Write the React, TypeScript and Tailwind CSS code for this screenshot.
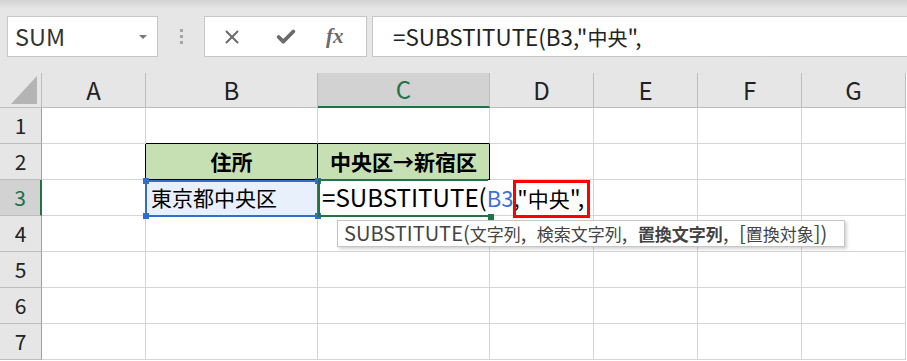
import { Check, X } from "lucide-react";

const cols = ["A", "B", "C", "D", "E", "F", "G"];
const rows = [1, 2, 3, 4, 5, 6, 7];

const CJK = /([\u3000-\u9fff\uff00-\uffef→]+)/;

// Excel's UI font draws latin glyphs larger than the CJK ones, so latin runs get bumped up
function Mixed({ text, latin = "text-[1.18em]" }: { text: string; latin?: string }) {
  const parts = text.split(CJK).filter(Boolean);
  return (
    <>
      {parts.map((p, i) =>
        CJK.test(p) ? (
          <span key={i}>{p}</span>
        ) : (
          <span key={i} className={latin}>
            {p}
          </span>
        ),
      )}
    </>
  );
}

function Cell({ row, col }: { row: number; col: string }) {
  if (row === 2 && (col === "B" || col === "C")) {
    return (
      <div className="flex items-center justify-center border-r border-b border-black bg-[#c6e0b4] text-[21px] font-bold leading-none text-black">
        {col === "B" ? "住所" : "中央区→新宿区"}
      </div>
    );
  }
  if (row === 3 && col === "B") {
    return (
      <div className="flex items-center border-r border-b border-[#d4d4d4] bg-[#e8f0fb] pl-[5px] text-[21px] leading-none text-black">
        東京都中央区
      </div>
    );
  }
  if (row === 3 && col === "C") {
    return (
      <div className="relative z-10 flex items-center overflow-visible whitespace-nowrap border-b border-[#d4d4d4] pl-[4px] text-[21px] leading-none text-black">
        <span>
          <Mixed text="=SUBSTITUTE(" latin="text-[1.15em]" />
          <span className="text-[1.05em] text-[#3a72d6]">B3</span>
          <span className="text-[1.05em]">,"</span>
          中央
          <span className="text-[1.1em]">",</span>
        </span>
      </div>
    );
  }
  if (row === 1 && (col === "B" || col === "C")) {
    return <div className="border-r border-b border-r-[#d4d4d4] border-b-black" />;
  }
  if (row === 2 && col === "A") {
    return <div className="border-r border-b border-r-black border-b-[#d4d4d4]" />;
  }
  return <div className="border-r border-b border-[#d4d4d4]" />;
}

export default function App() {
  return (
    <div className="h-[361px] w-[907px] overflow-hidden bg-white font-['Noto_Sans_CJK_JP',sans-serif] text-[#333]">
      {/* formula toolbar */}
      <div className="flex h-[73px] items-start bg-gradient-to-b from-[#d2d2d2] via-[#e6e6e6] via-[12%] to-[#e6e6e6] pt-4 pl-[7px]">
        <div className="flex h-[41px] w-[151px] items-center justify-between border border-[#c6c6c6] bg-white pr-[10px] pl-[7px]">
          <span className="text-[23.5px] leading-none text-[#333]">SUM</span>
          <span className="h-0 w-0 border-t-[4px] border-r-[4px] border-l-[4px] border-t-[#777] border-r-transparent border-l-transparent" />
        </div>
        <div className="flex h-[41px] w-[46px] flex-col items-center justify-center gap-[3px]">
          <span className="h-[3px] w-[3px] bg-[#a6a6a6]" />
          <span className="h-[3px] w-[3px] bg-[#a6a6a6]" />
          <span className="h-[3px] w-[3px] bg-[#a6a6a6]" />
        </div>
        <div className="flex h-[41px] w-[163px] items-center border border-[#c6c6c6] bg-white pl-[16px]">
          <X size={22} strokeWidth={2.2} className="text-[#6b6b6b]" />
          <Check size={22} strokeWidth={4.2} className="ml-[32px] text-[#6b6b6b]" />
          <span className="ml-[29px] font-['Liberation_Serif',serif] text-[21px] leading-none font-bold text-[#6b6b6b] italic">
            fx
          </span>
        </div>
        <div className="ml-[5px] flex h-[41px] flex-1 items-center border-y border-l border-[#c6c6c6] bg-white pl-[20px]">
          <span className="text-[20px] leading-none whitespace-nowrap text-[#222]">
            <Mixed text={'=SUBSTITUTE(B3,"中央",'} latin="text-[1.12em]" />
          </span>
        </div>
      </div>

      {/* sheet */}
      <div className="relative grid grid-cols-[42px_104px_172px_172px_104px_104px_104px_104px] grid-rows-[35px_repeat(7,36px)]">
        <div className="relative border-r border-b border-[#bdbdbd] bg-[#e6e6e6]">
          <div className="absolute right-[4px] bottom-[3px] h-0 w-0 border-b-[28px] border-l-[26px] border-b-[#b4b4b4] border-l-transparent" />
        </div>
        {cols.map((c) => (
          <div
            key={c}
            className={
              c === "C"
                ? "flex items-center justify-center border-r border-b-2 border-r-[#bdbdbd] border-b-[#217346] bg-[#d2d2d2] pb-[1px] text-[24px] leading-none text-[#217346]"
                : "flex items-center justify-center border-r border-b border-[#bdbdbd] bg-[#e6e6e6] text-[24px] leading-none text-[#222]"
            }
          >
            {c}
          </div>
        ))}
        {rows.map((r) => [
          <div
            key={`h${r}`}
            className={
              r === 3
                ? "flex items-center justify-center border-r-2 border-b border-r-[#217346] border-b-[#bdbdbd] bg-[#d2d2d2] text-[21px] leading-none text-[#217346]"
                : "flex items-center justify-center border-r border-b border-r-[#9e9e9e] border-b-[#bdbdbd] bg-[#e6e6e6] text-[21px] leading-none text-[#222]"
            }
          >
            {r}
          </div>,
          ...cols.map((c) => <Cell key={`${c}${r}`} row={r} col={c} />),
        ])}

        {/* B3 reference highlight */}
        <div className="pointer-events-none absolute top-[107px] left-[145px] z-20 h-[37px] w-[174px] border-2 border-[#2f6fce]">
          <span className="absolute -top-[4px] -left-[4px] h-[6px] w-[6px] bg-[#2f6fce]" />
          <span className="absolute -top-[4px] -right-[4px] h-[6px] w-[6px] bg-[#2f6fce]" />
          <span className="absolute -bottom-[4px] -left-[4px] h-[6px] w-[6px] bg-[#2f6fce]" />
          <span className="absolute -right-[4px] -bottom-[4px] h-[6px] w-[6px] bg-[#2f6fce]" />
        </div>

        {/* active cell C3 */}
        <div className="pointer-events-none absolute top-[106px] left-[318px] z-20 h-[38px] w-[170px] border-t-2 border-b-2 border-l-2 border-[#217346]">
          <span className="absolute -right-[6px] -bottom-[5px] h-[6px] w-[6px] bg-[#217346]" />
        </div>

        {/* red marker */}
        <div className="pointer-events-none absolute top-[107px] left-[513px] z-30 h-[38px] w-[77px] border-[3px] border-[#ff0000]" />

        {/* function tooltip */}
        <div className="absolute top-[147px] left-[337px] z-30 flex h-[27px] w-[508px] items-center border border-[#c6c6c6] bg-white pl-[6px] text-[17px] leading-none whitespace-nowrap text-[#444] shadow-[2px_2px_3px_rgba(0,0,0,0.18)] [word-spacing:6px]">
          <span>
            <Mixed text="SUBSTITUTE(文字列, 検索文字列, " latin="text-[1.18em]" />
            <span className="font-bold">置換文字列</span>
            <Mixed text=", [置換対象])" latin="text-[1.18em]" />
          </span>
        </div>
      </div>
    </div>
  );
}
